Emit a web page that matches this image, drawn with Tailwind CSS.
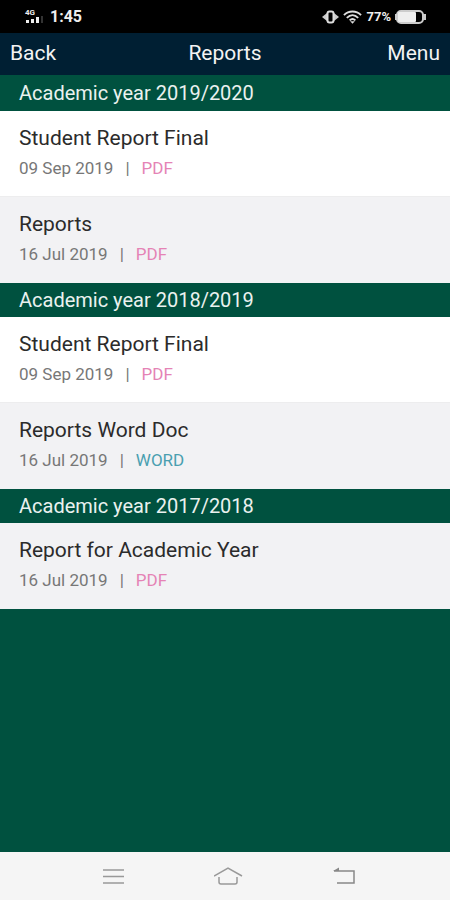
<!DOCTYPE html>
<html lang="en">
<head>
  <meta charset="UTF-8">
  <meta name="viewport" content="width=device-width, initial-scale=1.0">
  <title>Reports</title>
  <!-- Tailwind CSS -->
  <script src="https://cdn.jsdelivr.net/npm/@tailwindcss/browser@4"></script>
</head>
<body class="min-h-screen flex flex-col bg-[#00513f] font-['Roboto',sans-serif]">

  <!-- Status Bar -->
  <div class="h-[33px] bg-black text-[#eee] flex items-center justify-between px-6">
    <div class="flex items-center gap-[6px]">
      <svg class="w-5 h-4" viewBox="0 0 20 16" fill="#eee" aria-hidden="true">
        <text x="1" y="6" font-size="8" font-weight="700">4G</text>
        <rect x="2" y="11" width="3" height="3"/>
        <rect x="7" y="10" width="3" height="4"/>
        <rect x="12" y="8" width="3" height="6"/>
        <rect x="17" y="7" width="2" height="7" fill="#333"/>
      </svg>
      <span class="text-base font-bold">1:45</span>
    </div>
    <div class="flex items-center gap-1">
      <svg class="w-[17px] h-4" viewBox="0 0 17 16" aria-hidden="true">
        <path d="M5 4 0 8l5 4zM12 4l5 4-5 4z" fill="#ccc"/>
        <rect x="5.500" y="2.500" width="6" height="11" rx="2" fill="#000" stroke="#ddd" stroke-width="2"/>
      </svg>
      <svg class="w-[19px] h-4" viewBox="0 0 20 16" fill="none" stroke="#ddd" stroke-width="2" aria-hidden="true">
        <path d="M1 6c5-5 13-5 18 0M4 9c4-4 8-4 12 0M7 11.500c2-2 4-2 6 0"/>
        <path d="M7.500 12.500h5L10 15z" fill="#ddd" stroke="none"/>
      </svg>
      <span class="text-[13px] font-bold">77%</span>
      <svg class="w-[31px] h-[14px]" viewBox="0 0 31 14" aria-hidden="true">
        <path d="M0 4h3v6H0zM28 4h3v6h-3z" fill="#ccc"/>
        <rect x="2" y="1" width="26" height="12" rx="4" fill="#000" stroke="#ccc" stroke-width="2"/>
        <rect x="3" y="2" width="18" height="10" rx="1" fill="#eee"/>
      </svg>
    </div>
  </div>

  <!-- Header -->
  <header class="h-[42px] bg-[#001f33] text-[#f3f3f3] text-[21px] grid grid-cols-3 items-center px-[10px]">
    <a href="#" class="justify-self-start">Back</a>
    <h1 class="justify-self-center">Reports</h1>
    <button type="button" class="justify-self-end">Menu</button>
  </header>

  <!-- Reports List -->
  <main class="flex-1">
    <section>
      <h2 class="h-9 flex items-center px-[19px] text-[20px] text-[#eaf2ef]">Academic year 2019/2020</h2>
      <a href="#" class="block h-[86px] px-[19px] pt-3 bg-white border-b border-[#ededee]">
        <h3 class="text-[21px] leading-[30px] text-[#2b2b2b]">Student Report Final</h3>
        <p class="flex gap-3 text-[17px] leading-[30px] text-[#777]"><span>09 Sep 2019</span><span>|</span><span class="text-[#e583b5]">PDF</span></p>
      </a>
      <a href="#" class="block h-[86px] px-[19px] pt-3 bg-[#f2f2f4]">
        <h3 class="text-[21px] leading-[30px] text-[#2b2b2b]">Reports</h3>
        <p class="flex gap-3 text-[17px] leading-[30px] text-[#777]"><span>16 Jul 2019</span><span>|</span><span class="text-[#e583b5]">PDF</span></p>
      </a>
    </section>

    <section>
      <h2 class="h-[34px] flex items-center px-[19px] text-[20px] text-[#eaf2ef]">Academic year 2018/2019</h2>
      <a href="#" class="block h-[86px] px-[19px] pt-3 bg-white border-b border-[#ededee]">
        <h3 class="text-[21px] leading-[30px] text-[#2b2b2b]">Student Report Final</h3>
        <p class="flex gap-3 text-[17px] leading-[30px] text-[#777]"><span>09 Sep 2019</span><span>|</span><span class="text-[#e583b5]">PDF</span></p>
      </a>
      <a href="#" class="block h-[86px] px-[19px] pt-3 bg-[#f2f2f4]">
        <h3 class="text-[21px] leading-[30px] text-[#2b2b2b]">Reports Word Doc</h3>
        <p class="flex gap-3 text-[17px] leading-[30px] text-[#777]"><span>16 Jul 2019</span><span>|</span><span class="text-[#4a9fb0]">WORD</span></p>
      </a>
    </section>

    <section>
      <h2 class="h-[34px] flex items-center px-[19px] text-[20px] text-[#eaf2ef]">Academic year 2017/2018</h2>
      <a href="#" class="block h-[86px] px-[19px] pt-3 bg-[#f2f2f4]">
        <h3 class="text-[21px] leading-[30px] text-[#2b2b2b]">Report for Academic Year</h3>
        <p class="flex gap-3 text-[17px] leading-[30px] text-[#777]"><span>16 Jul 2019</span><span>|</span><span class="text-[#e583b5]">PDF</span></p>
      </a>
    </section>
  </main>

  <!-- Navigation Bar -->
  <nav class="h-12 bg-[#f5f5f5] flex items-center justify-between pl-[98px] pr-[91px]">
    <button type="button" aria-label="Recent apps">
      <svg class="w-[30px] h-6" viewBox="0 0 30 24" fill="none" stroke="#999" stroke-width="1.500">
        <path d="M5 6h21M5 12.500h21M5 19h21"/>
      </svg>
    </button>
    <button type="button" aria-label="Home">
      <svg class="w-[30px] h-6" viewBox="0 0 30 24" fill="none" stroke="#999" stroke-width="1.500">
        <path d="M0 12 14 4l14 8M5 13v5q0 2 2 2h14q2 0 2-2v-5"/>
      </svg>
    </button>
    <button type="button" aria-label="Back">
      <svg class="w-[30px] h-6" viewBox="0 0 30 24" fill="none" stroke="#888" stroke-width="1.500">
        <path d="M5 7h20v12H8"/>
        <path d="M4 7 10 3.500V7z" fill="#888" stroke="none"/>
      </svg>
    </button>
  </nav>

</body>
</html>
